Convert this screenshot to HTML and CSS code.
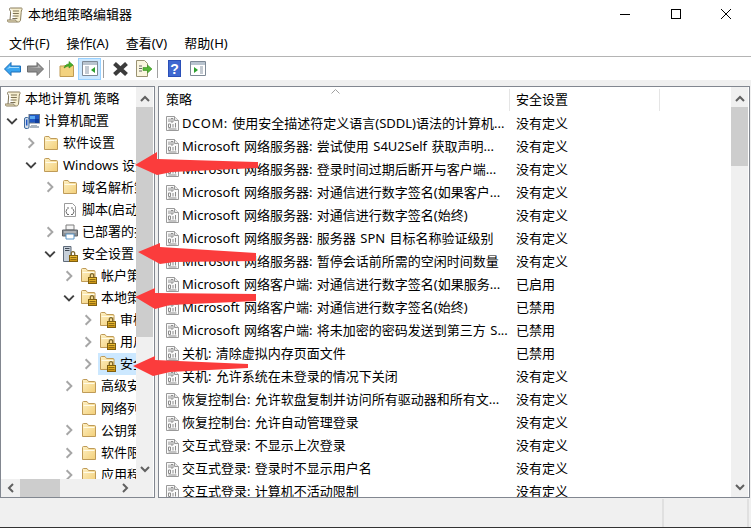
FILE: index.html
```html
<!DOCTYPE html>
<html lang="zh-CN">
<head>
<meta charset="utf-8">
<title>本地组策略编辑器</title>
<link rel="stylesheet" href="styles.css">
</head>
<body>
<svg class="defs" width="0" height="0">
  <defs>
    <linearGradient id="fold" x1="0" y1="0" x2="1" y2="1">
      <stop offset="0" stop-color="#fdf0c4"/>
      <stop offset="1" stop-color="#f3cf78"/>
    </linearGradient>
    <linearGradient id="gold" x1="0" y1="0" x2="0" y2="1">
      <stop offset="0" stop-color="#f2c63c"/>
      <stop offset="1" stop-color="#c98f10"/>
    </linearGradient>
    <symbol id="scroll" viewBox="0 0 16 16">
      <path d="M3.500 1h10.500c1 0 1.500.7 1 1.500-.7 1-.9 2-.8 3l-.7 7.500c-.1 1-.9 2-2 2H2c-1.200 0-2-.8-1.800-2h8.600c0 1 .6 1.500 1.400 1.500" fill="#f7efcf" stroke="#8b7f5e"/>
      <path d="M3.500 1C2.500 1 2.200 2 2.800 3c.6 1 1 2 .8 3L3 13M6 4h6M5.800 6.500h6M5.600 9h6M5.400 11.500h5" fill="none" stroke="#7d7254"/>
    </symbol>
    <symbol id="computer" viewBox="0 0 16 16">
      <rect x="5" y="1.500" width="10.500" height="8.500" fill="#1f58c4" stroke="#64748a"/>
      <path d="M6 3h5v3H6z" fill="#5aa8f0"/>
      <path d="M11 6h4v4h-4z" fill="#0f3e9e"/>
      <rect x=".5" y="4.500" width="4.500" height="11" rx="1.500" fill="#d5dfea" stroke="#3f6a9c"/>
      <path d="M2.700 6.500v6" stroke="#1f58c4" stroke-width="1.500"/>
      <path d="M7 12h6v1h2v2H6v-2h1z" fill="#a9b4c0"/>
    </symbol>
    <symbol id="folder" viewBox="0 0 16 16">
      <path d="M1.500 14.500V2.500c0-.6.400-1 1-1h3.500l1.500 2h6c.6 0 1 .4 1 1v10z" fill="url(#fold)" stroke="#bf9b58"/>
      <path d="M2.500 5.500h11" stroke="#fffbe8"/>
    </symbol>
    <symbol id="lockfolder" viewBox="0 0 16 16">
      <path d="M.5 13.500V1.500c0-.6.400-1 1-1h3.500l1.500 2h6.500c.6 0 1 .4 1 1v10z" fill="url(#fold)" stroke="#bf9b58"/>
      <path d="M1.500 4.500h12" stroke="#fffbe8"/>
      <path d="M9.300 9.500V7.500c0-2.600 3.400-2.600 3.400 0v2" fill="none" stroke="#7c6830" stroke-width="1.300"/>
      <rect x="7.500" y="9.500" width="8" height="6" fill="url(#gold)" stroke="#7f5f10"/>
      <path d="M8.500 11.500h6M8.500 13.500h6" stroke="#8f6c12"/>
    </symbol>
    <symbol id="script" viewBox="0 0 16 16">
      <path d="M2.500 1.500h8l3 3v10h-11z" fill="#fff" stroke="#9b9b9b"/>
      <path d="M5 6h2M9 6h2M5 7l-1 2.500 1 2.500M11 7l1 2.500-1 2.500M5 12.500h2M9 12.500h2" fill="none" stroke="#6f6f6f"/>
    </symbol>
    <symbol id="printer" viewBox="0 0 16 16">
      <path d="M4 1h8v5H4z" fill="#f5f5f5" stroke="#7f7f7f"/>
      <path d="M.5 6h15v6H.5z" fill="#8b8f94" stroke="#5f6368"/>
      <path d="M2 8h12" stroke="#d0d3d6"/>
      <path d="M4 10h8v5H4z" fill="#fff" stroke="#5b96c8"/>
    </symbol>
    <symbol id="secserver" viewBox="0 0 16 16">
      <path d="M1.500 .5h7.500v15H1.500z" fill="#c7d0da" stroke="#5f6b7a"/>
      <path d="M3 2.500h4.500M3 4.500h4.500" stroke="#3f4955"/>
      <path d="M9.300 9.500V7.500c0-2.600 3.400-2.600 3.400 0v2" fill="none" stroke="#7c6830" stroke-width="1.300"/>
      <rect x="7.500" y="9.500" width="8" height="6" fill="url(#gold)" stroke="#7f5f10"/>
      <path d="M8.500 11.500h6M8.500 13.500h6" stroke="#8f6c12"/>
    </symbol>
    <symbol id="policy" viewBox="0 0 13 15">
      <path d="M.5 .5h8l4 4v10H.5z" fill="#fafafa" stroke="#9a9a9a"/>
      <path d="M8.500 .5v4h4" fill="#e8e8e8" stroke="#9a9a9a"/>
      <path d="M3 2.500v3.500M5 2.500h2v3.500H5zM2.500 8h2v3.500h-2zM7 8v3.500M9.500 7v4.500M2.500 13h8" fill="none" stroke="#8c8c8c"/>
    </symbol>
    <symbol id="chev-r" viewBox="0 0 10 10"><path d="M3 1l4 4-4 4" fill="none" stroke="#a6a6a6" stroke-width="1.600"/></symbol>
    <symbol id="chev-d" viewBox="0 0 10 10"><path d="M1 3l4 4 4-4" fill="none" stroke="#404040" stroke-width="1.600"/></symbol>
    <symbol id="sb-up" viewBox="0 0 10 8"><path d="M1 6l4-4 4 4" fill="none" stroke="#606060" stroke-width="2"/></symbol>
    <symbol id="sb-down" viewBox="0 0 10 8"><path d="M1 2l4 4 4-4" fill="none" stroke="#606060" stroke-width="2"/></symbol>
    <symbol id="sb-left" viewBox="0 0 8 10"><path d="M6 1L2 5l4 4" fill="none" stroke="#606060" stroke-width="2"/></symbol>
    <symbol id="sb-right" viewBox="0 0 8 10"><path d="M2 1l4 4-4 4" fill="none" stroke="#606060" stroke-width="2"/></symbol>
  </defs>
</svg>

<div class="window">
  <header class="titlebar">
    <svg class="title-icon"><use href="#scroll"/></svg>
    <span class="title-text">本地组策略编辑器</span>
    <div class="winctrls">
      <svg class="winctrl" viewBox="0 0 46 30"><path d="M17 14.500h10" stroke="#000"/></svg>
      <svg class="winctrl" viewBox="0 0 46 30"><rect x="18.500" y="9.500" width="9" height="9" fill="none" stroke="#000"/></svg>
      <svg class="winctrl" viewBox="0 0 46 30"><path d="M18 9l10 10M28 9L18 19" stroke="#000" fill="none"/></svg>
    </div>
  </header>

  <nav class="menubar">
    <span class="menu-item">文件(F)</span>
    <span class="menu-item">操作(A)</span>
    <span class="menu-item">查看(V)</span>
    <span class="menu-item">帮助(H)</span>
  </nav>

  <div class="toolbar">
    <span class="tool">
      <svg width="17" height="14" viewBox="0 0 17 14"><path d="M.5 7L7 .5v3.500h9.500v6H7v3.500z" fill="#38a4f0" stroke="#1c6fb8"/><path d="M3 7l3-3v1h9v1H6z" fill="#a8dcfa"/></svg>
    </span>
    <span class="tool">
      <svg width="17" height="14" viewBox="0 0 17 14"><path d="M16.500 7L10 .5v3.500H.5v6H10v3.500z" fill="#8e8e8e" stroke="#6c6c6c"/><path d="M2 5h9V3l3 3z" fill="#bdbdbd"/></svg>
    </span>
    <span class="tool-sep"></span>
    <span class="tool">
      <svg width="15" height="17" viewBox="0 0 15 17"><path d="M1 16.500V6h3l8-1.500v1h2.500v11z" fill="#f3d27f" stroke="#c09b52"/><path d="M5 8c1-3 3-4 5-4V1.500l4 3.500-4 3V6c-2 0-3 1-5 2z" fill="#47b02c" stroke="#2f8a1a" stroke-width=".6"/></svg>
    </span>
    <span class="tool tool-active">
      <svg width="16" height="15" viewBox="0 0 16 15"><path d="M.5 .5h15v14H.5z" fill="#fff" stroke="#7e8a96"/><path d="M1 1h14v3H1z" fill="#b9c4cf"/><path d="M3 6h4M3 8h4M3 10h4M3 12h4" stroke="#8a97a5"/><path d="M13 6v6L9 9z" fill="#2ca02c"/></svg>
    </span>
    <span class="tool-sep"></span>
    <span class="tool">
      <svg width="17" height="16" viewBox="0 0 17 16"><path d="M2.500 2.500l12 11M14.500 2.500l-12 11" stroke="#3c3c3c" stroke-width="4.200"/></svg>
    </span>
    <span class="tool">
      <svg width="16" height="17" viewBox="0 0 16 17"><path d="M.5 .5h8l3 3v13H.5z" fill="#fbf6df" stroke="#9a9272"/><path d="M3 6h3M3 8.500h3M3 11h3" stroke="#666"/><path d="M7 7.500h4.500V5l4.500 4-4.500 4v-2.500H7z" fill="#55b636" stroke="#3a8f20" stroke-width=".6"/></svg>
    </span>
    <span class="tool-sep"></span>
    <span class="tool">
      <svg width="13" height="17" viewBox="0 0 13 17"><rect width="13" height="17" fill="#2a4fb8"/><rect x="1" y="1" width="11" height="15" fill="#3f68d0"/></svg>
      <span class="help-mark">?</span>
    </span>
    <span class="tool">
      <svg width="16" height="15" viewBox="0 0 16 15"><path d="M.5 .5h15v14H.5z" fill="#fff" stroke="#7e8a96"/><path d="M1 1h14v3H1z" fill="#b9c4cf"/><path d="M10 6h3M10 8h3M10 10h3M10 12h3" stroke="#8a97a5"/><path d="M4 6v6l4-3z" fill="#2ca02c"/></svg>
    </span>
  </div>

  <main class="panes">
    <section class="pane pane-left">
      <div class="pane-top">
        <div class="tree">
          <div class="node l0"><svg class="ico"><use href="#scroll"/></svg><span class="label">本地计算机 策略</span></div>
          <div class="node l1"><svg class="chev"><use href="#chev-d"/></svg><svg class="ico"><use href="#computer"/></svg><span class="label">计算机配置</span></div>
          <div class="node l2"><svg class="chev"><use href="#chev-r"/></svg><svg class="ico"><use href="#folder"/></svg><span class="label">软件设置</span></div>
          <div class="node l2"><svg class="chev"><use href="#chev-d"/></svg><svg class="ico"><use href="#folder"/></svg><span class="label">Windows 设置</span></div>
          <div class="node l3"><svg class="chev"><use href="#chev-r"/></svg><svg class="ico"><use href="#folder"/></svg><span class="label">域名解析策略</span></div>
          <div class="node l3"><span class="chev"></span><svg class="ico"><use href="#script"/></svg><span class="label">脚本(启动/关机)</span></div>
          <div class="node l3"><svg class="chev"><use href="#chev-r"/></svg><svg class="ico"><use href="#printer"/></svg><span class="label">已部署的打印机</span></div>
          <div class="node l3"><svg class="chev"><use href="#chev-d"/></svg><svg class="ico"><use href="#secserver"/></svg><span class="label">安全设置</span></div>
          <div class="node l4"><svg class="chev"><use href="#chev-r"/></svg><svg class="ico"><use href="#lockfolder"/></svg><span class="label">帐户策略</span></div>
          <div class="node l4"><svg class="chev"><use href="#chev-d"/></svg><svg class="ico"><use href="#lockfolder"/></svg><span class="label">本地策略</span></div>
          <div class="node l5"><svg class="chev"><use href="#chev-r"/></svg><svg class="ico"><use href="#lockfolder"/></svg><span class="label">审核策略</span></div>
          <div class="node l5"><svg class="chev"><use href="#chev-r"/></svg><svg class="ico"><use href="#lockfolder"/></svg><span class="label">用户权限</span></div>
          <div class="node l5"><svg class="chev"><use href="#chev-r"/></svg><span class="selected"><svg class="ico"><use href="#lockfolder"/></svg><span class="label">安全选项</span></span></div>
          <div class="node l4"><svg class="chev"><use href="#chev-r"/></svg><svg class="ico"><use href="#folder"/></svg><span class="label">高级安全</span></div>
          <div class="node l4"><span class="chev"></span><svg class="ico"><use href="#folder"/></svg><span class="label">网络列表</span></div>
          <div class="node l4"><svg class="chev"><use href="#chev-r"/></svg><svg class="ico"><use href="#folder"/></svg><span class="label">公钥策略</span></div>
          <div class="node l4"><svg class="chev"><use href="#chev-r"/></svg><svg class="ico"><use href="#folder"/></svg><span class="label">软件限制</span></div>
          <div class="node l4"><svg class="chev"><use href="#chev-r"/></svg><svg class="ico"><use href="#folder"/></svg><span class="label">应用程序</span></div>
        </div>
        <div class="vscroll">
          <svg class="sb-arrow"><use href="#sb-up"/></svg>
          <div class="thumb thumb-tree"></div>
          <svg class="sb-arrow sb-end"><use href="#sb-down"/></svg>
        </div>
      </div>
      <div class="hscroll">
        <svg class="sb-harrow"><use href="#sb-left"/></svg>
        <div class="hthumb"></div>
        <svg class="sb-harrow sb-hend"><use href="#sb-right"/></svg>
      </div>
    </section>

    <section class="pane pane-right">
      <div class="listview">
        <div class="list-head">
          <div class="col-name head-cell">策略<svg class="sort" viewBox="0 0 9 5"><path d="M.5 4.500l4-4 4 4" fill="none" stroke="#a0a0a0"/></svg></div>
          <div class="col-set head-cell">安全设置</div>
          <div class="col-fill"></div>
        </div>
        <div class="list-body">
          <div class="row"><div class="col-name"><svg class="pico"><use href="#policy"/></svg><span class="ptext"><span class="acronym">DCOM:</span> 使用安全描述符定义语言(SDDL)语法的计算机...</span></div><div class="col-set">没有定义</div></div>
          <div class="row"><div class="col-name"><svg class="pico"><use href="#policy"/></svg><span class="ptext">Microsoft 网络服务器: 尝试使用 S4U2Self 获取声明...</span></div><div class="col-set">没有定义</div></div>
          <div class="row"><div class="col-name"><svg class="pico"><use href="#policy"/></svg><span class="ptext">Microsoft 网络服务器: 登录时间过期后断开与客户端...</span></div><div class="col-set">没有定义</div></div>
          <div class="row"><div class="col-name"><svg class="pico"><use href="#policy"/></svg><span class="ptext">Microsoft 网络服务器: 对通信进行数字签名(如果客户...</span></div><div class="col-set">没有定义</div></div>
          <div class="row"><div class="col-name"><svg class="pico"><use href="#policy"/></svg><span class="ptext">Microsoft 网络服务器: 对通信进行数字签名(始终)</span></div><div class="col-set">没有定义</div></div>
          <div class="row"><div class="col-name"><svg class="pico"><use href="#policy"/></svg><span class="ptext">Microsoft 网络服务器: 服务器 SPN 目标名称验证级别</span></div><div class="col-set">没有定义</div></div>
          <div class="row"><div class="col-name"><svg class="pico"><use href="#policy"/></svg><span class="ptext">Microsoft 网络服务器: 暂停会话前所需的空闲时间数量</span></div><div class="col-set">没有定义</div></div>
          <div class="row"><div class="col-name"><svg class="pico"><use href="#policy"/></svg><span class="ptext">Microsoft 网络客户端: 对通信进行数字签名(如果服务...</span></div><div class="col-set">已启用</div></div>
          <div class="row"><div class="col-name"><svg class="pico"><use href="#policy"/></svg><span class="ptext">Microsoft 网络客户端: 对通信进行数字签名(始终)</span></div><div class="col-set">已禁用</div></div>
          <div class="row"><div class="col-name"><svg class="pico"><use href="#policy"/></svg><span class="ptext">Microsoft 网络客户端: 将未加密的密码发送到第三方 S...</span></div><div class="col-set">已禁用</div></div>
          <div class="row"><div class="col-name"><svg class="pico"><use href="#policy"/></svg><span class="ptext">关机: 清除虚拟内存页面文件</span></div><div class="col-set">已禁用</div></div>
          <div class="row"><div class="col-name"><svg class="pico"><use href="#policy"/></svg><span class="ptext">关机: 允许系统在未登录的情况下关闭</span></div><div class="col-set">没有定义</div></div>
          <div class="row"><div class="col-name"><svg class="pico"><use href="#policy"/></svg><span class="ptext">恢复控制台: 允许软盘复制并访问所有驱动器和所有文...</span></div><div class="col-set">没有定义</div></div>
          <div class="row"><div class="col-name"><svg class="pico"><use href="#policy"/></svg><span class="ptext">恢复控制台: 允许自动管理登录</span></div><div class="col-set">没有定义</div></div>
          <div class="row"><div class="col-name"><svg class="pico"><use href="#policy"/></svg><span class="ptext">交互式登录: 不显示上次登录</span></div><div class="col-set">没有定义</div></div>
          <div class="row"><div class="col-name"><svg class="pico"><use href="#policy"/></svg><span class="ptext">交互式登录: 登录时不显示用户名</span></div><div class="col-set">没有定义</div></div>
          <div class="row"><div class="col-name"><svg class="pico"><use href="#policy"/></svg><span class="ptext">交互式登录: 计算机不活动限制</span></div><div class="col-set">没有定义</div></div>
        </div>
      </div>
      <div class="vscroll vscroll-list">
        <svg class="sb-arrow"><use href="#sb-up"/></svg>
        <div class="thumb thumb-list"></div>
        <svg class="sb-arrow sb-end"><use href="#sb-down"/></svg>
      </div>
    </section>
  </main>

  <footer class="statusbar">
    <div class="status-main"></div>
    <div class="status-cell"></div>
  </footer>
  <div class="bottom-edge"></div>

  <svg class="annotations" viewBox="0 0 751 528">
    <path d="M135 165L157 152V159L258 162V168L172 172L157 175z"/>
    <path d="M138 252L160 243V247L256 253V261L174 262L160 264z"/>
    <path d="M135 297L155 288V293L256 294V301L170 305L155 309z"/>
    <path d="M133 366L155 356V360L248 364V368L170 372L153 376z"/>
  </svg>
</div>
</body>
</html>
```

FILE: styles.css
```css
* { box-sizing: border-box; }
html, body { margin: 0; padding: 0; }
body {
  width: 751px;
  height: 528px;
  overflow: hidden;
  background: #fff;
  color: #000;
  font: 13px/1.2 "Noto Sans", "Noto Sans CJK SC", sans-serif;
}
.defs { position: absolute; }
.window {
  position: relative;
  width: 751px;
  height: 528px;
  display: flex;
  flex-direction: column;
  overflow: hidden;
}

/* title bar */
.titlebar { height: 30px; display: flex; align-items: center; flex: none; }
.title-icon { width: 16px; height: 16px; margin-left: 7px; }
.title-text { margin-left: 5px; }
.winctrls { margin-left: auto; margin-right: 2px; display: flex; gap: 4px; }
.winctrl { width: 46px; height: 30px; }

/* menu */
.menubar {
  height: 27px;
  flex: none;
  display: flex;
  align-items: center;
  padding: 1px 0 0 9px;
  gap: 17px;
  border-bottom: 1px solid #b4b4b4;
}

/* toolbar */
.toolbar {
  height: 23px;
  flex: none;
  display: flex;
  align-items: center;
  padding-left: 1px;
}
.tool {
  position: relative;
  width: 23px;
  height: 22px;
  display: flex;
  align-items: center;
  justify-content: center;
}
.tool-active { background: #cce8ff; border: 1px solid #99d1ff; }
.tool-sep { width: 1px; height: 18px; background: #a0a0a0; margin: 0 5px 0 2px; }
.help-mark {
  position: absolute;
  inset: 0;
  text-align: center;
  font: bold 14px/22px "Liberation Sans", sans-serif;
  color: #fff;
}

/* panes */
.panes {
  flex: 1;
  min-height: 0;
  display: flex;
  gap: 3px;
  background: #f0f0f0;
  padding-top: 6px;
}
.pane {
  background: #fff;
  border: 1px solid #828790;
  display: flex;
  min-height: 0;
}
.pane-left { width: 155px; flex-direction: column; padding-right: 1px; }
.pane-right { flex: 1; margin-right: 1px; padding-right: 1px; }
.pane-top { flex: 1; display: flex; min-height: 0; }

/* tree */
.tree { flex: 1; min-width: 0; overflow: hidden; padding-top: 1px; }
.node {
  height: 22.1px;
  display: flex;
  align-items: center;
  white-space: nowrap;
}
.l0 { padding-left: 4px; }
.l1 { padding-left: 5px; }
.l2 { padding-left: 24px; }
.l3 { padding-left: 43px; }
.l4 { padding-left: 62px; }
.l5 { padding-left: 81px; }
.chev { width: 12px; height: 12px; flex: none; margin-right: 6px; display: block; }
.ico { width: 16px; height: 16px; flex: none; }
.label { margin-left: 4px; }
.selected {
  flex: 1;
  height: 22px;
  display: flex;
  align-items: center;
  margin-left: -2px;
  padding-left: 2px;
  background: #cce8ff;
}

/* scrollbars */
.vscroll {
  width: 17px;
  flex: none;
  background: #f0f0f0;
  display: flex;
  flex-direction: column;
  align-items: center;
}
.vscroll-list { margin-left: auto; }
.sb-arrow { width: 10px; height: 8px; flex: none; margin: 8px 0 4px; }
.sb-end { margin: auto 0 6px; }
.thumb { width: 17px; background: #cdcdcd; flex: none; }
.thumb-tree { height: 230px; }
.thumb-list { height: 59px; }
.hscroll {
  height: 18px;
  flex: none;
  background: #f0f0f0;
  display: flex;
  align-items: center;
}
.sb-harrow { width: 8px; height: 10px; flex: none; margin: 0 2px 0 6px; }
.hthumb { width: 40px; height: 100%; background: #cdcdcd; margin-left: 3px; }
.sb-hend { margin: 0 24px 0 auto; }

/* list */
.listview { flex: 1; min-width: 0; display: flex; flex-direction: column; overflow: hidden; }
.list-head { height: 25px; display: flex; flex: none; padding: 2px 0 1px; }
.head-cell { position: relative; display: flex; align-items: center; border-right: 1px solid #e5e5e5; }
.col-name {
  width: 351px;
  flex: none;
  padding-left: 7px;
  display: flex;
  align-items: center;
  white-space: nowrap;
  overflow: hidden;
}
.col-set { width: 150px; flex: none; padding-left: 6px; white-space: nowrap; }
.col-fill { flex: 1; }
.sort { position: absolute; left: 172px; top: 0; width: 9px; height: 5px; }
.list-body { flex: 1; min-height: 0; overflow: hidden; }
.row { height: 23.06px; display: flex; align-items: center; }
.pico { width: 13px; height: 15px; flex: none; }
.ptext { margin-left: 3px; word-spacing: 1px; }
.acronym { letter-spacing: .6px; }

/* status bar */
.statusbar { height: 29px; flex: none; display: flex; background: #f0f0f0; padding-top: 1px; }
.status-main { width: 664px; border-right: 2px solid #e0e0e0; }
.status-cell { width: 85px; border-right: 2px solid #e0e0e0; }
.bottom-edge { height: 1px; flex: none; background: #333; }

/* hand-drawn annotations over the window */
.annotations { position: absolute; left: 0; top: 0; width: 751px; height: 528px; pointer-events: none; }
.annotations path { fill: #fb3c3c; }
```
